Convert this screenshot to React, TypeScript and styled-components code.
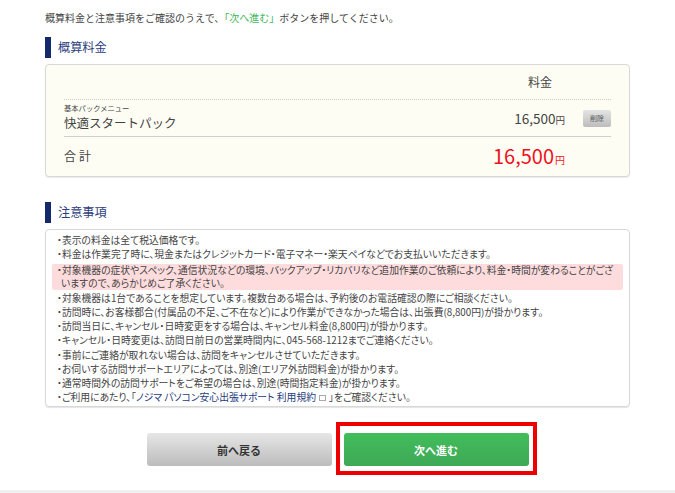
import React from "react";
import styled, { createGlobalStyle } from "styled-components";

const Global = createGlobalStyle`
  html, body {
    margin: 0;
    padding: 0;
    background: #ffffff;
    color: #444444;
    font-family: "Noto Sans CJK JP", "Liberation Sans", sans-serif;
  }
`;

const Page = styled.div`
  width: 675px;
  height: 493px;
  overflow: hidden;
  display: flex;
  flex-direction: column;
  padding: 0 45px;
  box-sizing: border-box;
`;

const Intro = styled.p`
  margin: 0;
  padding-top: 10px;
  height: 26px;
  box-sizing: border-box;
  font-size: 10px;
  line-height: 15px;
  white-space: nowrap;
  em {
    font-style: normal;
    color: #3eb55a;
  }
`;

const Heading = styled.h2<{ $top: number }>`
  margin: ${p => p.$top}px 0 6px;
  height: 21px;
  border-left: 6px solid #14286e;
  padding-left: 7px;
  font-size: 12.2px;
  font-weight: 400;
  line-height: 21px;
  color: #2d3d80;
`;

const PriceCard = styled.section`
  height: 113px;
  box-sizing: border-box;
  background: #fefdf3;
  border: 1px solid #d8d8d8;
  border-radius: 4px;
  box-shadow: 0 1px 1px #ececec;
  padding: 0 18px;
  display: flex;
  flex-direction: column;
`;

const PriceHead = styled.div`
  height: 35px;
  box-sizing: border-box;
  border-bottom: 1px dotted #cccccc;
  display: flex;
  justify-content: flex-end;
  align-items: center;
  padding: 0 59px 2px 0;
  font-size: 12px;
`;

const PriceRow = styled.div`
  height: 37px;
  box-sizing: border-box;
  border-bottom: 1px solid #cfcfcf;
  display: flex;
  align-items: center;
  justify-content: space-between;
`;

const ItemName = styled.div`
  display: flex;
  flex-direction: column;
`;

const Sub = styled.span`
  font-size: 7.3px;
  line-height: 9px;
`;

const Name = styled.span`
  font-size: 12.5px;
  line-height: 18px;
  margin-top: 1px;
`;

const RowRight = styled.div`
  display: flex;
  align-items: center;
  gap: 18px;
`;

const Amount = styled.span`
  font-size: 13.5px;
  small {
    font-size: 9.5px;
  }
`;

const DeleteButton = styled.button`
  width: 28px;
  height: 17px;
  padding: 0;
  border: 0;
  border-radius: 2px;
  background: linear-gradient(#e4e4e4, #bdbdbd);
  font-family: inherit;
  font-size: 7px;
  color: #555555;
`;

const TotalRow = styled.div`
  flex: 1;
  display: flex;
  align-items: center;
  justify-content: space-between;
  padding: 0 46px 3px 0;
`;

const TotalLabel = styled.span`
  font-size: 12px;
  letter-spacing: 3px;
`;

const TotalAmount = styled.span`
  font-size: 20px;
  color: #ee1122;
  small {
    font-size: 10px;
    margin-left: 1px;
  }
`;

const NotesCard = styled.ul`
  margin: 0;
  list-style: none;
  height: 178px;
  box-sizing: border-box;
  border: 1px solid #d8d8d8;
  border-radius: 4px;
  box-shadow: 0 1px 1px #e4e4e4;
  padding: 3px 6px 0;
`;

const Note = styled.li<{ $alert?: boolean }>`
  font-size: 9.8px;
  font-feature-settings: "palt";
  line-height: ${p => (p.$alert ? "13px" : "14.1px")};
  padding-left: 9px;
  margin: ${p => (p.$alert ? "3px 0 1px" : "0")};
  text-indent: -4px;
  background: ${p => (p.$alert ? "#fedcdd" : "transparent")};
  border-radius: 2px;
  white-space: pre;
  a {
    color: #25397c;
    text-decoration: none;
  }
`;

const ExternalMark = styled.svg`
  width: 7px;
  height: 6px;
  margin: 0 3px;
`;

const Actions = styled.div`
  display: flex;
  justify-content: center;
  align-items: flex-start;
  gap: 4px;
  margin-top: 15px;
  padding-left: 8px;
`;

const Button = styled.button`
  width: 185px;
  height: 33px;
  border: 0;
  border-radius: 3px;
  font-family: inherit;
  font-size: 11px;
  font-weight: 700;
`;

const BackButton = styled(Button)`
  margin-top: 11px;
  background: linear-gradient(#e6e6e6, #bcbcbc);
  color: #333333;
`;

const Highlight = styled.div`
  border: 4px solid #ee0000;
  padding: 7px 4px 5px;
  display: flex;
`;

const NextButton = styled(Button)`
  background: linear-gradient(#42bd5b, #3fa856);
  color: #ffffff;
`;

const Footer = styled.div`
  position: absolute;
  left: 0;
  top: 490px;
  width: 675px;
  height: 3px;
  background: #f0f0f0;
`;

const notesBefore = [
  "・表示の料金は全て税込価格です。",
  "・料金は作業完了時に、現金またはクレジットカード・電子マネー・楽天ペイなどでお支払いいただきます。",
];

const notesAfter = [
  "・対象機器は1台であることを想定しています。複数台ある場合は、予約後のお電話確認の際にご相談ください。",
  "・訪問時に、お客様都合(付属品の不足、ご不在など)により作業ができなかった場合は、出張費(8,800円)が掛かります。",
  "・訪問当日に、キャンセル・日時変更をする場合は、キャンセル料金(8,800円)が掛かります。",
  "・キャンセル・日時変更は、訪問日前日の営業時間内に、045-568-1212までご連絡ください。",
  "・事前にご連絡が取れない場合は、訪問をキャンセルさせていただきます。",
  "・お伺いする訪問サポートエリアによっては、別途(エリア外訪問料金)が掛かります。",
  "・通常時間外の訪問サポートをご希望の場合は、別途(時間指定料金)が掛かります。",
];

const App = () => {
  return (
    <Page>
      <Global />
      <Intro>
        概算料金と注意事項をご確認のうえで、<em>「次へ進む」</em>ボタンを押してください。
      </Intro>

      <Heading $top={11}>概算料金</Heading>
      <PriceCard>
        <PriceHead>料金</PriceHead>
        <PriceRow>
          <ItemName>
            <Sub>基本パックメニュー</Sub>
            <Name>快適スタートパック</Name>
          </ItemName>
          <RowRight>
            <Amount>
              16,500<small>円</small>
            </Amount>
            <DeleteButton>削除</DeleteButton>
          </RowRight>
        </PriceRow>
        <TotalRow>
          <TotalLabel>合計</TotalLabel>
          <TotalAmount>
            16,500<small>円</small>
          </TotalAmount>
        </TotalRow>
      </PriceCard>

      <Heading $top={25}>注意事項</Heading>
      <NotesCard>
        {notesBefore.map(text => (
          <Note key={text}>{text}</Note>
        ))}
        <Note $alert>
          {"・対象機器の症状やスペック、通信状況などの環境、バックアップ・リカバリなど追加作業のご依頼により、料金・時間が変わることがござ\nいますので、あらかじめご了承ください。"}
        </Note>
        {notesAfter.map(text => (
          <Note key={text}>{text}</Note>
        ))}
        <Note>
          ・ご利用にあたり、「<a href="#">ノジマ パソコン安心出張サポート 利用規約</a>
          <ExternalMark viewBox="0 0 7 6">
            <rect x="0.5" y="0.5" width="6" height="5" fill="none" stroke="#aaaaaa" />
          </ExternalMark>
          」をご確認ください。
        </Note>
      </NotesCard>

      <Actions>
        <BackButton>前へ戻る</BackButton>
        <Highlight>
          <NextButton>次へ進む</NextButton>
        </Highlight>
      </Actions>
      <Footer />
    </Page>
  );
};

export default App;
